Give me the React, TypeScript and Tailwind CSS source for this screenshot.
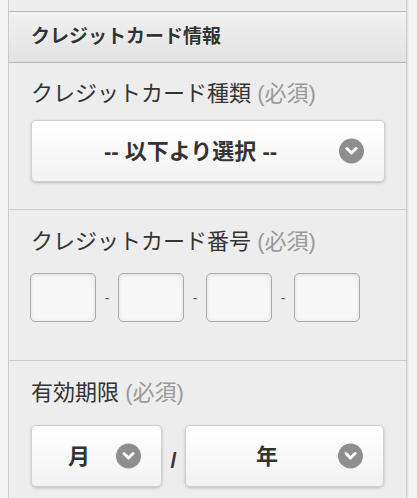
import React from "react";

const FONT = {
  fontFamily: "Helvetica, 'Liberation Sans', 'Noto Sans CJK JP', sans-serif",
};

function Chevron() {
  return (
    <div className="w-[25px] h-[25px] rounded-full bg-[#8e8e8e] flex items-center justify-center">
      <svg width="13" height="9" viewBox="0 0 13 9">
        <path d="M2 2 L6.5 6.5 L11 2" fill="none" stroke="#fff" strokeWidth="3" strokeLinecap="round" strokeLinejoin="round" />
      </svg>
    </div>
  );
}

function SelectBox({ label, className }: { label: string; className: string }) {
  return (
    <div
      className={`relative h-[62px] rounded-[5px] border border-[#cfcfcf] bg-gradient-to-b from-[#ffffff] to-[#f2f2f2] shadow-[0_1px_3px_rgba(0,0,0,0.22)] flex items-center pl-[15px] pr-[50px] ${className}`}
    >
      <span className="flex-1 text-center text-[22px] font-bold text-[#333] [text-shadow:0_1px_0_#fff]">{label}</span>
      <div className="absolute right-[20px] top-1/2 -translate-y-1/2">
        <Chevron />
      </div>
    </div>
  );
}

function Label({ text }: { text: string }) {
  return (
    <div className="h-[28px] leading-[28px] text-[22px] text-[#333] whitespace-nowrap">
      {text} <span className="text-[#9a9a9a]">(必須)</span>
    </div>
  );
}

function Input() {
  return (
    <div className="w-[66px] h-[49px] rounded-[5px] border border-[#aaaaaa] bg-[#f7f7f7] shadow-[inset_0_1px_4px_rgba(0,0,0,0.12)]" />
  );
}

function Dash() {
  return <div className="w-[22px] text-center text-[14px] text-[#555] leading-none">-</div>;
}

export default function App() {
  return (
    <div style={FONT} className="w-[417px] h-[498px] overflow-hidden bg-[#f4f4f4] pl-[8px]">
      <div className="w-[399px] min-h-[498px] bg-[#ededed] border-l border-r border-[#c9c9c9] shadow-[1px_0_2px_rgba(0,0,0,0.1)]">
        <div className="h-[11px]" />
        <div className="h-[52px] border-t border-b border-[#b9b9b9] bg-gradient-to-b from-[#f1f1f1] to-[#e2e2e2] flex items-center pl-[22px]">
          <span className="text-[19px] font-bold text-[#333] [text-shadow:0_1px_0_#fff]">クレジットカード情報</span>
        </div>

        <div className="pt-[17px] pb-[27px] pl-[22px] pr-[22px] border-b border-[#cdcdcd]">
          <Label text="クレジットカード種類" />
          <div className="mt-[12px]">
            <SelectBox label="-- 以下より選択 --" className="w-[354px]" />
          </div>
        </div>

        <div className="pt-[18px] pb-[38px] pl-[21px] border-b border-[#cdcdcd]">
          <div className="pl-[1px]">
            <Label text="クレジットカード番号" />
          </div>
          <div className="mt-[17px] flex items-center">
            <Input />
            <Dash />
            <Input />
            <Dash />
            <Input />
            <Dash />
            <Input />
          </div>
        </div>

        <div className="pt-[18px] pl-[22px]">
          <Label text="有効期限" />
          <div className="mt-[18px] flex items-center">
            <SelectBox label="月" className="w-[131px]" />
            <div className="w-[23px] text-center text-[22px] font-bold text-[#333] mt-[8px]">/</div>
            <SelectBox label="年" className="w-[199px]" />
          </div>
        </div>
      </div>
    </div>
  );
}
